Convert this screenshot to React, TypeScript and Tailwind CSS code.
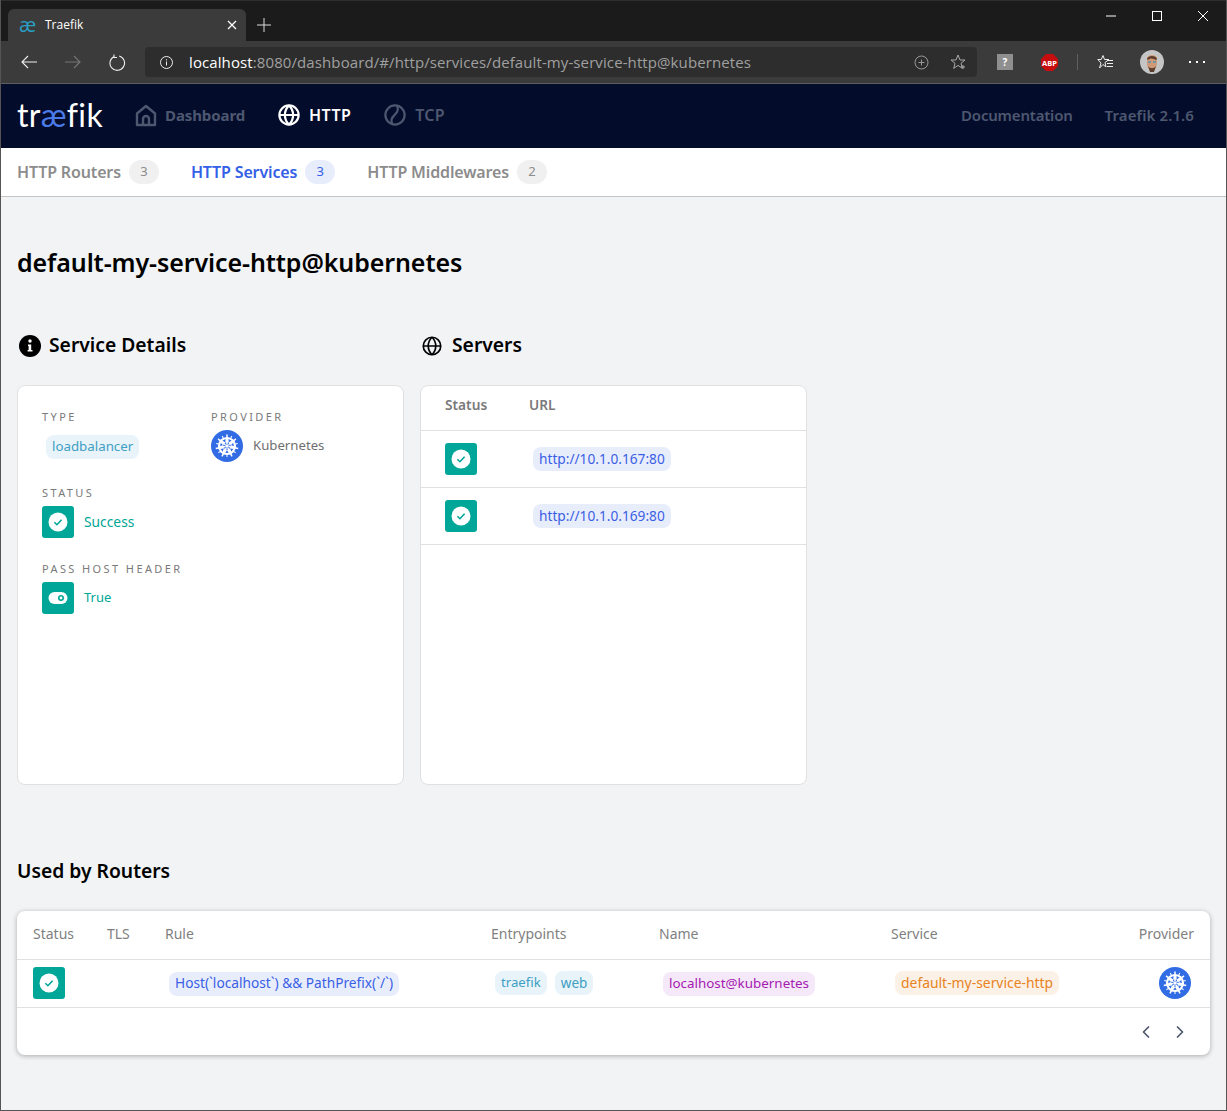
import { ChevronLeft, ChevronRight } from 'lucide-react';
import type { ReactNode } from 'react';

const appFont = "font-['Noto_Sans',sans-serif]";

// kubernetes helm, spokes are computed so they all stay on the heptagon
function Helm({ size = 32 }: { size?: number }) {
  const spokes = [0, 1, 2, 3, 4, 5, 6].map((i) => (i * 360) / 7);
  return (
    <svg width={size} height={size} viewBox="0 0 32 32" className="shrink-0">
      <circle cx="16" cy="16" r="16" fill="#326ce5" />
      <circle cx="16" cy="16" r="8" fill="none" stroke="#fff" strokeWidth="2.2" />
      <circle cx="16" cy="16" r="1.8" fill="#fff" />
      {spokes.map((a) => (
        <g key={a} transform={`rotate(${a} 16 16)`}>
          <path d="M16 14V4.5" stroke="#fff" strokeWidth="1.5" />
          <path d="M14.6 9h2.8l.4 3.5h-3.6z" fill="#fff" />
        </g>
      ))}
      {spokes.map((a) => (
        <path key={a} d="M16 8.5 16 5" transform={`rotate(${a + 180 / 7} 16 16)`} stroke="#fff" strokeWidth="1" />
      ))}
    </svg>
  );
}

function StatusBox() {
  return (
    <div className="w-8 h-8 rounded-[3px] bg-[#00a697] flex items-center justify-center shrink-0">
      <svg width="20" height="20" viewBox="0 0 20 20">
        <circle cx="10" cy="10" r="9.5" fill="#fff" />
        <path d="M6.4 10.2l2.5 2.5 4.7-5" fill="none" stroke="#00a697" strokeWidth="1.6" />
      </svg>
    </div>
  );
}

function ToggleBox() {
  return (
    <div className="w-8 h-8 rounded-[3px] bg-[#00a697] flex items-center justify-center shrink-0">
      <svg width="20" height="14" viewBox="0 0 20 14">
        <rect x="0.5" y="1" width="19" height="12" rx="6" fill="#fff" />
        <circle cx="13" cy="7" r="2.2" fill="none" stroke="#00a697" strokeWidth="1.6" />
      </svg>
    </div>
  );
}

// text size comes in through className, the chips don't all share one
function Chip({ className, children }: { className: string; children: ReactNode }) {
  return (
    <span className={`inline-flex items-center h-6 px-1.5 rounded-lg whitespace-nowrap ${className}`}>
      {children}
    </span>
  );
}

function Label({ children }: { children: ReactNode }) {
  return (
    <div className="h-[26px] flex items-center text-[11px] uppercase tracking-[2.4px] text-[#7a7a7a] whitespace-nowrap">{children}</div>
  );
}

function GlobeIcon({ size, color, width }: { size: number; color: string; width: number }) {
  return (
    <svg width={size} height={size} viewBox="0 0 24 24" fill="none" stroke={color} strokeWidth={width} className="shrink-0">
      <circle cx="12" cy="12" r="10.5" />
      <path d="M1.5 12h21M12 1.5c-6 6-6 15 0 21M12 1.5c6 6 6 15 0 21" />
    </svg>
  );
}

function SubTab({ label, count, active }: { label: string; count: number; active?: boolean }) {
  return (
    <div className={`flex items-center gap-2 text-base font-semibold tracking-[-0.15px] ${active ? 'text-[#3360e6]' : 'text-[#8c8c8c]'}`}>
      <span>{label}</span>
      <span
        className={`w-[30px] h-6 rounded-full flex items-center justify-center text-[13px] font-normal ${
          active ? 'bg-[#e8edfb]' : 'bg-[#f0f0f0]'
        }`}
      >
        {count}
      </span>
    </div>
  );
}

function BrowserChrome() {
  return (
    <div className="font-['Open_Sans',sans-serif] shrink-0">
      {/* title bar */}
      <div className="h-[41px] bg-[#1b1b1b] flex items-end pl-[7px] border-t border-[#2e2e2e]">
        <div className="w-[238px] h-8 bg-[#3b3b3b] rounded-t-md flex items-center pl-[11px] pr-[9px] text-white">
          <span className="text-[#2b9ec3] text-[20px] font-medium leading-none w-[26px]">æ</span>
          <span className="text-xs flex-1">Traefik</span>
          <svg width="10" height="10" viewBox="0 0 10 10" stroke="#fff" strokeWidth="1.3">
            <path d="M1 1l8 8M9 1l-8 8" />
          </svg>
        </div>
        <div className="h-8 ml-[11px] flex items-center">
          <svg width="14" height="14" viewBox="0 0 14 14" stroke="#ddd" strokeWidth="1">
            <path d="M7 0v14M0 7h14" />
          </svg>
        </div>
        <div className="ml-auto self-start flex items-center h-[30px]">
          <div className="w-[46px] flex justify-center">
            <svg width="10" height="10" viewBox="0 0 10 10" stroke="#fff"><path d="M0 5h10" /></svg>
          </div>
          <div className="w-[46px] flex justify-center">
            <svg width="10" height="10" viewBox="0 0 10 10" stroke="#fff" fill="none"><rect x="0.5" y="0.5" width="9" height="9" /></svg>
          </div>
          <div className="w-[46px] flex justify-center">
            <svg width="10" height="10" viewBox="0 0 10 10" stroke="#fff"><path d="M0 0l10 10M10 0L0 10" /></svg>
          </div>
        </div>
      </div>
      {/* toolbar */}
      <div className="h-[43px] bg-[#3b3b3b] border-b border-[#5f5f5f] flex items-center">
        <div className="w-[144px] flex items-center pl-[20px] gap-[28px]">
          <svg width="16" height="14" viewBox="0 0 16 14" fill="none" stroke="#eee" strokeWidth="1.1"><path d="M16 7H1M7 1L1 7l6 6" /></svg>
          <svg width="16" height="14" viewBox="0 0 16 14" fill="none" stroke="#777" strokeWidth="1.1"><path d="M0 7h15M9 1l6 6-6 6" /></svg>
          <svg width="17" height="17" viewBox="0 0 17 17" fill="none" stroke="#eee" strokeWidth="1.1"><path d="M5.2 2.4a7.3 7.3 0 1 0 5-.4M5 .5v3h3" /></svg>
        </div>
        <div className="w-[832px] h-[30px] rounded bg-[#2d2d2d] flex items-center pl-[14px] pr-[11px]">
          <svg width="15" height="15" viewBox="0 0 15 15" fill="none" stroke="#eee" className="shrink-0"><circle cx="7.5" cy="7.5" r="6" /><path d="M7.5 6.5v4M7.5 4.2v1.2" /></svg>
          <span className="ml-[15px] text-[15px] tracking-[0.1px] text-[#a0a0a0] whitespace-nowrap">
            <span className="text-white">localhost</span>:8080/dashboard/#/http/services/default-my-service-http@kubernetes
          </span>
          <div className="ml-auto flex items-center gap-[21px]">
            <svg width="15" height="15" viewBox="0 0 15 15" fill="none" stroke="#999"><circle cx="7.5" cy="7.5" r="6.5" /><path d="M7.5 4.5v6M4.5 7.5h6" /></svg>
            <svg width="16" height="16" viewBox="0 0 16 16" fill="none" stroke="#aaa"><path d="M8 1l2 5h5l-4 3.3 1.3 5L8 11.4l-4.3 3 1.3-5L1 6h5zM11 13h4M13 11v4" /></svg>
          </div>
        </div>
        <div className="flex-1 flex items-center pl-5">
          <div className="w-4 h-4 bg-[#8f8f8f] flex items-center justify-center text-white text-[10px] font-bold leading-none">?</div>
          <svg width="17" height="17" viewBox="0 0 17 17" className="ml-[28px]">
            <path d="M5 0h7l5 5v7l-5 5H5l-5-5V5z" fill="#c70d0d" />
            <text x="8.5" y="11.5" textAnchor="middle" fontSize="7.5" fontWeight="700" fill="#fff">ABP</text>
          </svg>
          <div className="w-px h-4 bg-[#5f5f5f] ml-[19px]" />
          <svg width="17" height="17" viewBox="0 0 17 17" fill="none" stroke="#eee" className="ml-[19px]"><path d="M6 1.5l1.5 4H12L8 8.5 9 13l-3-2.5L2.5 14 4 9 .8 5.5h3.4zM10 6.5h6M10 9.5h6M10 12.5h6" /></svg>
          <svg width="24" height="24" viewBox="0 0 24 24" className="ml-[26px]">
            <circle cx="12" cy="12" r="12" fill="#c5c5c5" />
            <path d="M7 8c1-4 9-4 10 0v6c-1 5-4 7-5 7s-4-2-5-6z" fill="#d19a77" />
            <path d="M7 9c1-4 9-4 10 0l-1 1c-3-2-6-2-8 0zM8 16c2 3 6 3 8 0l-2 6h-4z" fill="#5b3d2c" />
            <path d="M8 11h3v2H8zM13 11h3v2h-3z" fill="#6f97a8" />
          </svg>
          <div className="ml-[25px] flex gap-[5px]">
            <div className="w-[2px] h-[2px] bg-white" />
            <div className="w-[2px] h-[2px] bg-white" />
            <div className="w-[2px] h-[2px] bg-white" />
          </div>
        </div>
      </div>
    </div>
  );
}

function TopNav() {
  return (
    <div className="h-[64px] bg-[#030c2b] flex items-center pl-4 pr-8 pb-[2px] shrink-0">
      <div className="w-[118px] text-[32px] font-['Lato',sans-serif] font-normal leading-none text-white tracking-[0.4px]">
        tr<span className="text-[#4a7be8]">æ</span>fik
      </div>
      <div className="flex items-center gap-[7px] text-[15px] font-bold tracking-[-0.1px] text-[#4d5870]">
        <svg width="24" height="24" viewBox="0 0 24 24" fill="none" stroke="#4d5870" strokeWidth="2.4" strokeLinejoin="round" className="-ml-px">
          <path d="M3 22V10.5L12 3l9 7.5V22zM9 22v-6a3 3 0 0 1 6 0v6" />
        </svg>
        <span>Dashboard</span>
      </div>
      <div className="flex items-center gap-[9px] ml-[33px] text-base font-semibold tracking-[0.4px] text-white">
        <GlobeIcon size={22} color="#fff" width={2.4} />
        <span>HTTP</span>
      </div>
      <div className="flex items-center gap-[9px] ml-[33px] text-base font-semibold tracking-[0.3px] text-[#4d5870]">
        <svg width="22" height="22" viewBox="0 0 24 24" fill="none" stroke="#4d5870" strokeWidth="2.4">
          <circle cx="12" cy="12" r="10.5" />
          <path d="M9 21.5c-3-5 1-8 3-10s5-5 2-10" />
        </svg>
        <span>TCP</span>
      </div>
      <div className="ml-auto flex items-center gap-8 text-[15px] font-semibold text-[#4d5870]">
        <span className="tracking-[-0.2px]">Documentation</span>
        <span className="tracking-[0.1px]">Traefik 2.1.6</span>
      </div>
    </div>
  );
}

export default function App() {
  return (
    <div className={`w-full h-[1111px] overflow-hidden flex flex-col bg-[#f1f3f5] border-x border-b border-[#555] ${appFont}`}>
      <BrowserChrome />
      <TopNav />
      <div className="h-[49px] bg-white border-b border-[#c4c4c4] flex items-center pl-4 pb-px gap-8 shrink-0">
        <SubTab label="HTTP Routers" count={3} />
        <SubTab label="HTTP Services" count={3} active />
        <SubTab label="HTTP Middlewares" count={2} />
      </div>

      <div className="px-4 flex-1">
        <h1 className="mt-[48px] h-9 flex items-center text-[25px] tracking-[-0.1px] font-semibold text-black">default-my-service-http@kubernetes</h1>

        <div className="mt-[45px] flex gap-4">
          <div className="w-[387px]">
            <div className="h-10 flex items-center gap-2 pl-[2px] pb-px text-[19.3px] font-semibold text-black">
              <svg width="22" height="22" viewBox="0 0 22 22">
                <circle cx="11" cy="11" r="11" fill="#000" />
                <circle cx="11" cy="6" r="1.7" fill="#fff" />
                <path d="M9 9.5h3.2V15H13.5v1.5H8.6V15h1v-4H9z" fill="#fff" />
              </svg>
              <span>Service Details</span>
            </div>
            <div className="mt-[19px] h-[400px] rounded-lg border border-[#e0e0e0] bg-white px-6 pt-[18px]">
              <div className="grid grid-cols-[169px_1fr]">
                <div>
                  <Label>Type</Label>
                  <Chip className="ml-1 mt-[5px] bg-[#e8f4f9] text-[#3e9ec4] text-[13.3px]">loadbalancer</Chip>
                </div>
                <div>
                  <Label>Provider</Label>
                  <div className="flex items-center gap-[10px] text-[13.2px] text-[#6f6f6f]">
                    <Helm />
                    <span>Kubernetes</span>
                  </div>
                </div>
              </div>
              <div className="mt-[18px]">
                <Label>Status</Label>
                <div className="flex items-center gap-[10px] text-[13.8px] text-[#00a697]">
                  <StatusBox />
                  <span>Success</span>
                </div>
              </div>
              <div className="mt-[18px]">
                <Label>Pass Host Header</Label>
                <div className="flex items-center gap-[10px] text-[13px] text-[#00a697]">
                  <ToggleBox />
                  <span>True</span>
                </div>
              </div>
            </div>
          </div>

          <div className="w-[387px]">
            <div className="h-10 flex items-center gap-[10px] pl-[2px] pb-px text-[19.3px] font-semibold text-black">
              <GlobeIcon size={20} color="#000" width={2} />
              <span>Servers</span>
            </div>
            <div className="mt-[19px] h-[400px] rounded-lg border border-[#e0e0e0] bg-white">
              <div className="h-[45px] flex items-center pl-6 pb-[6px] border-b border-[#e0e0e0] text-[13.7px] font-semibold text-[#7a7a7a]">
                <span className="w-[84px]">Status</span>
                <span>URL</span>
              </div>
              {['http://10.1.0.167:80', 'http://10.1.0.169:80'].map((url) => (
                <div key={url} className="h-[57px] flex items-center pl-6 border-b border-[#e0e0e0]">
                  <StatusBox />
                  <Chip className="ml-14 bg-[#e8edfb] text-[#3a5fe5] text-[13.7px]">{url}</Chip>
                </div>
              ))}
            </div>
          </div>
        </div>

        <h2 className="mt-[70px] h-8 flex items-center text-[19.3px] font-semibold text-black">Used by Routers</h2>

        <div className="mt-[24px] rounded-lg bg-white shadow-[0_1px_5px_rgba(0,0,0,0.3)]">
          <div className="h-[49px] px-4 pb-1 grid grid-cols-[74px_58px_326px_168px_232px_1fr] items-center border-b border-[#e0e0e0] text-[14px] text-[#7f7f7f]">
            <span>Status</span>
            <span>TLS</span>
            <span>Rule</span>
            <span>Entrypoints</span>
            <span>Name</span>
            <div className="flex justify-between">
              <span>Service</span>
              <span>Provider</span>
            </div>
          </div>
          <div className="h-[48px] px-4 pb-px grid grid-cols-[74px_58px_326px_168px_232px_1fr] items-center border-b border-[#e0e0e0]">
            <StatusBox />
            <div />
            <div>
              <Chip className="ml-1 bg-[#e8edfb] text-[#3a5fe5] text-[13.7px]">Host(`localhost`) &amp;&amp; PathPrefix(`/`)</Chip>
            </div>
            <div className="flex gap-2 pl-1">
              <Chip className="bg-[#e8f4f9] text-[#3e9ec4] text-[13.2px]">traefik</Chip>
              <Chip className="bg-[#e8f4f9] text-[#3e9ec4] text-[13.5px]">web</Chip>
            </div>
            <div>
              <Chip className="ml-1 bg-[#f5e8f8] text-[#a41ab3] text-[13.4px]">localhost@kubernetes</Chip>
            </div>
            <div className="flex items-center justify-between pr-[3px]">
              <Chip className="ml-1 bg-[#fbf1e6] text-[#e8831f] text-[13.9px]">default-my-service-http</Chip>
              <Helm />
            </div>
          </div>
          <div className="h-[47px] flex items-center justify-end gap-[14px] pr-[20px] text-[#4a5568]">
            <ChevronLeft size={20} />
            <ChevronRight size={20} />
          </div>
        </div>
      </div>
    </div>
  );
}
